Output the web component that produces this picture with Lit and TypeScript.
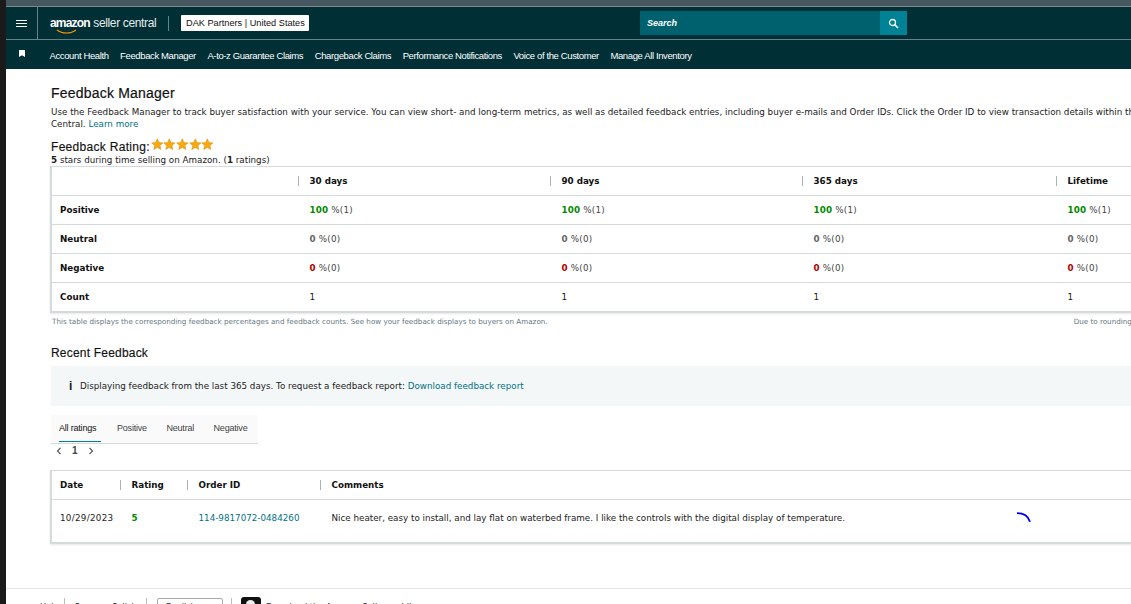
import { LitElement, css, html } from "lit";
import { customElement } from "lit/decorators.js";

const navLinks = [
  "Account Health",
  "Feedback Manager",
  "A-to-z Guarantee Claims",
  "Chargeback Claims",
  "Performance Notifications",
  "Voice of the Customer",
  "Manage All Inventory",
];

const periods = ["30 days", "90 days", "365 days", "Lifetime"];

const star = html`<svg class="star" viewBox="0 0 24 24" width="12.6" height="12.6">
  <path fill="#f7a90f" stroke="#d9900f" stroke-width="1" d="M12 1.5l3.2 7 7.6.8-5.7 5.1 1.6 7.5L12 18.1l-6.7 3.8 1.6-7.5L1.2 9.3l7.6-.8z" />
</svg>`;

@customElement("app-root")
export class AppRoot extends LitElement {
  static styles = css`
    :host {
      display: flex;
      width: 1131px;
      height: 604px;
      overflow: hidden;
      background: #fff;
      font-family: "DejaVu Sans", Verdana, sans-serif;
      font-size: 8.75px;
      color: #111;
    }
    .edge {
      flex: 0 0 6px;
      background: #1a1a1a;
    }
    .page {
      flex: 1;
      min-width: 0;
      display: flex;
      flex-direction: column;
      overflow: hidden;
    }
    .chrome {
      flex: 0 0 6px;
      background: #47575f;
      border-bottom: 1px solid #7d8a8c;
    }
    .top {
      flex: 0 0 32px;
      display: flex;
      align-items: center;
      background: #002f36;
      border-bottom: 1px solid #6b8083;
    }
    .burger {
      flex: 0 0 31px;
      height: 32px;
      display: flex;
      align-items: center;
      justify-content: center;
      border-right: 1px solid #6b8083;
    }
    .logo {
      display: flex;
      flex-direction: column;
      margin-left: 12px;
      width: 106px;
      color: #fff;
      font-family: "Liberation Sans", Arial, sans-serif;
      font-size: 12px;
      line-height: 15px;
      position: relative;
      white-space: nowrap;
    }
    .logo b {
      letter-spacing: -0.8px;
    }
    .logo span {
      font-weight: 400;
      letter-spacing: -0.35px;
      color: #e6ecec;
    }
    .smile {
      position: absolute;
      left: 6px;
      top: 13px;
    }
    .divider {
      width: 1px;
      height: 15px;
      background: #6b8083;
      margin: 0 12px;
    }
    .merchant {
      width: 128px;
      box-sizing: border-box;
      background: #fff;
      color: #111;
      font-family: "Liberation Sans", Arial, sans-serif;
      font-size: 9.2px;
      line-height: 16px;
      padding: 0 5px;
      border-radius: 1px;
      white-space: nowrap;
    }
    .search {
      display: flex;
      margin-left: 331px;
      width: 267px;
      height: 24px;
      background: #00616e;
    }
    .search span {
      flex: 1;
      color: #fff;
      font: italic 700 9px/24px "Liberation Sans", Arial, sans-serif;
      padding-left: 7px;
    }
    .search i {
      flex: 0 0 27px;
      background: #008296;
      display: flex;
      align-items: center;
      justify-content: center;
    }
    .nav {
      flex: 0 0 29px;
      display: flex;
      align-items: center;
      gap: 11.5px;
      background: #002f36;
      color: #fff;
      font-family: "Liberation Sans", Arial, sans-serif;
      font-size: 9.5px;
      letter-spacing: -0.38px;
      white-space: nowrap;
    }
    .nav span {
      position: relative;
      top: 1px;
    }
    .pin {
      flex: 0 0 32px;
      display: flex;
      justify-content: center;
      position: relative;
      top: -1px;
    }
    .content {
      flex: 1;
      padding: 16px 0 0 45px;
      min-height: 0;
    }
    .h1 {
      font: 400 14px/17px "Liberation Sans", Arial, sans-serif;
      letter-spacing: 0.2px;
      color: #111;
      margin: 0;
      -webkit-text-stroke: 0.2px #111;
    }
    .intro {
      width: 1200px;
      margin: 4px 0 0;
      line-height: 12px;
      color: #222;
    }
    a {
      color: #007185;
      text-decoration: none;
    }
    .rating-line {
      display: flex;
      align-items: flex-start;
      margin-top: 10px;
      height: 14px;
      font: 400 12px/14px "Liberation Sans", Arial, sans-serif;
      letter-spacing: 0.3px;
      -webkit-text-stroke: 0.15px #111;
      color: #111;
    }
    .stars {
      display: flex;
      margin-left: 1px;
      margin-top: -2px;
    }
    .star {
      display: block;
    }
    .sub {
      line-height: 12px;
      color: #222;
    }
    .table {
      width: 1300px;
      margin: 0 0 0 -1px;
      border: 1px solid #d5dbdb;
      border-bottom: 2px solid #d5dbdb;
      border-left-width: 2px;
      box-shadow: 0 1px 2px rgba(0, 0, 0, 0.1);
    }
    .row {
      display: grid;
      grid-template-columns: 246px 252px 252px 254px 252px;
      height: 28px;
      align-items: center;
      border-bottom: 1px solid #d5dbdb;
    }
    .row:last-child {
      border-bottom: 0;
    }
    .row > * {
      padding-left: 8px;
      white-space: nowrap;
    }
    .row b {
      font-weight: 700;
      color: #111;
    }
    .row .head {
      position: relative;
      padding-left: 11.5px;
    }
    .row .val {
      padding-left: 11.5px;
      letter-spacing: 0.2px;
    }
    .head::before {
      content: "";
      position: absolute;
      left: 0;
      top: 0;
      bottom: 0;
      width: 1px;
      background: #a9b3b3;
    }
    .good {
      color: #008a00;
      font-weight: 700;
    }
    .bad {
      color: #b00000;
      font-weight: 700;
    }
    .none {
      color: #666;
      font-weight: 700;
    }
    .pct {
      color: #444;
    }
    .note {
      display: flex;
      width: 1300px;
      margin-top: 4px;
      padding-left: 1px;
      font-size: 7.2px;
      line-height: 10px;
      color: #66787f;
      white-space: nowrap;
    }
    .note span:last-child {
      margin-left: 526px;
    }
    .h2 {
      font: 400 12px/16px "Liberation Sans", Arial, sans-serif;
      letter-spacing: 0.2px;
      -webkit-text-stroke: 0.15px #111;
      margin: 18px 0 0;
      color: #111;
    }
    .info {
      display: flex;
      align-items: center;
      height: 40px;
      margin-top: 5px;
      padding-left: 18px;
      background: #f3f7f8;
      color: #222;
      white-space: nowrap;
    }
    .info .i {
      font-family: "Liberation Sans", Arial, sans-serif;
      font-weight: 700;
      font-size: 12px;
      width: 11px;
    }
    .tabs {
      display: flex;
      width: 207px;
      height: 29px;
      margin-top: 9px;
      background: #fafafa;
      border-bottom: 1px solid #d5d9d9;
      font: 400 9px/1 "Liberation Sans", Arial, sans-serif;
      letter-spacing: -0.2px;
      color: #444;
      box-sizing: border-box;
      padding-left: 8px;
      white-space: nowrap;
    }
    .tabs span {
      flex: none;
      height: 27px;
      padding-top: 9px;
      box-sizing: border-box;
      margin-right: 19.5px;
    }
    .tabs .on {
      color: #111;
      border-bottom: 1px solid #008296;
      width: 42px;
      margin-right: 16px;
    }
    .pager {
      display: flex;
      align-items: center;
      height: 14px;
      padding-left: 5px;
      gap: 10px;
      font: 700 10px/14px "Liberation Sans", Arial, sans-serif;
      color: #444;
    }
    .pager svg {
      display: block;
    }
    .recent {
      width: 1300px;
      margin: 12px 0 0 -1px;
      border: 1px solid #d5dbdb;
      border-bottom: 2px solid #d5dbdb;
      border-left-width: 2px;
      box-shadow: 0 1px 2px rgba(0, 0, 0, 0.1);
      position: relative;
    }
    .recent .tr {
      display: grid;
      grid-template-columns: 68px 67px 133px 1000px;
      white-space: nowrap;
    }
    .recent .tr > * {
      padding-left: 11.5px;
    }
    .recent .tr > :first-child {
      padding-left: 8px;
    }
    .recent .th {
      height: 28px;
      align-items: center;
      border-bottom: 1px solid #d5dbdb;
      font-weight: 700;
    }
    .recent .th span {
      position: relative;
    }
    .recent .th span + span::before {
      content: "";
      position: absolute;
      left: 0;
      top: 0;
      bottom: 0;
      width: 1px;
      background: #a9b3b3;
    }
    .recent .td {
      height: 42px;
      padding-top: 12px;
      box-sizing: border-box;
      line-height: 12px;
      color: #222;
    }
    .recent .td > :first-child {
      letter-spacing: 0.3px;
    }
    .spinner {
      position: absolute;
      left: 965px;
      top: 41px;
    }
    .footer {
      flex: 0 0 16px;
      display: flex;
      align-items: flex-start;
      border-top: 1px solid #e3e6e6;
      padding: 9px 0 0 34px;
      color: #333;
      font-size: 8.3px;
      line-height: 12px;
      white-space: nowrap;
      overflow: hidden;
      box-sizing: border-box;
    }
    .footer .txt {
      margin-top: 3px;
    }
    .footer .sep {
      width: 1px;
      height: 12px;
      background: #bbb;
      margin-left: 5px;
      margin-right: 10px;
      flex: none;
    }
    .footer .lang {
      flex: none;
      width: 66px;
      height: 12px;
      border: 1px solid #aaa;
      border-radius: 2px;
      padding: 2px 0 0 8px;
      box-sizing: border-box;
    }
    .footer .phone {
      flex: none;
      width: 20px;
      height: 14px;
      background: #111;
      border-radius: 3px;
      margin: -1px 5px 0 0;
      display: flex;
      justify-content: center;
      padding-top: 3px;
      box-sizing: border-box;
    }
    .footer .phone::after {
      content: "";
      width: 9px;
      height: 9px;
      border-radius: 50%;
      background: #eee;
    }
    .footer .pp {
      width: 69px;
    }
    .footer .pp + .sep {
      margin-left: 2px;
    }
    .footer .lang + .sep {
      margin-left: 8px;
      margin-right: 9px;
    }
  `;

  render() {
    return html`
      <div class="edge"></div>
      <div class="page">
        <div class="chrome"></div>
        <div class="top">
          <div class="burger">
            <svg width="11" height="7" viewBox="0 0 11 7"><path fill="none" stroke="#fff" stroke-width="1" d="M0 .5h11M0 3.5h11M0 6.5h11" /></svg>
          </div>
          <div class="logo">
            <div><b>amazon</b> <span>seller central</span></div>
            <svg class="smile" width="22" height="6" viewBox="0 0 22 6"><path fill="none" stroke="#ff9900" stroke-width="1.2" d="M1 1c5 4 14 4 19 0" /></svg>
          </div>
          <div class="divider"></div>
          <div class="merchant">DAK Partners | United States</div>
          <div class="search">
            <span>Search</span>
            <i><svg width="11" height="11" viewBox="0 0 11 11"><circle cx="4.5" cy="4.5" r="3" fill="none" stroke="#fff" stroke-width="1.3" /><path stroke="#fff" stroke-width="1.6" d="M6.8 6.8L10 10" /></svg></i>
          </div>
        </div>
        <div class="nav">
          <div class="pin">
            <svg width="6" height="7" viewBox="0 0 6 7"><path fill="#fff" d="M0 0h6v7L3 5.2 0 7z" /></svg>
          </div>
          ${navLinks.map((link) => html`<span>${link}</span>`)}
        </div>
        <div class="content">
          <h1 class="h1">Feedback Manager</h1>
          <p class="intro">
            Use the Feedback Manager to track buyer satisfaction with your service. You can view short- and long-term metrics, as well as detailed feedback entries, including buyer e-mails and Order IDs. Click the Order ID to view transaction details within the Seller<br />Central. <a>Learn more</a>
          </p>
          <div class="rating-line">
            Feedback Rating:
            <div class="stars">${star}${star}${star}${star}${star}</div>
          </div>
          <div class="sub"><b>5</b> stars during time selling on Amazon. (<b>1</b> ratings)</div>
          <div class="table">
            <div class="row">
              <span></span>
              ${periods.map((p) => html`<b class="head">${p}</b>`)}
            </div>
            <div class="row">
              <b>Positive</b>
              ${periods.map(() => html`<span class="val"><span class="good">100</span> <span class="pct">%(1)</span></span>`)}
            </div>
            <div class="row">
              <b>Neutral</b>
              ${periods.map(() => html`<span class="val"><span class="none">0</span> <span class="pct">%(0)</span></span>`)}
            </div>
            <div class="row">
              <b>Negative</b>
              ${periods.map(() => html`<span class="val"><span class="bad">0</span> <span class="pct">%(0)</span></span>`)}
            </div>
            <div class="row">
              <b>Count</b>
              ${periods.map(() => html`<span class="val">1</span>`)}
            </div>
          </div>
          <div class="note">
            <span>This table displays the corresponding feedback percentages and feedback counts. See how your feedback displays to buyers on Amazon.</span>
            <span>Due to rounding, percentages may not add up to 100%.</span>
          </div>
          <h2 class="h2">Recent Feedback</h2>
          <div class="info">
            <span class="i">i</span>
            <span>Displaying feedback from the last 365 days. To request a feedback report:&nbsp;<a>Download feedback report</a></span>
          </div>
          <div class="tabs">
            <span class="on">All ratings</span>
            <span>Positive</span>
            <span>Neutral</span>
            <span>Negative</span>
          </div>
          <div class="pager">
            <svg width="6" height="8" viewBox="0 0 6 8"><path fill="none" stroke="#555" stroke-width="1.2" d="M4.5.8L1.5 4l3 3.2" /></svg>
            <span>1</span>
            <svg width="6" height="8" viewBox="0 0 6 8"><path fill="none" stroke="#555" stroke-width="1.2" d="M1.5.8L4.5 4l-3 3.2" /></svg>
          </div>
          <div class="recent">
            <div class="tr th">
              <span>Date</span><span>Rating</span><span>Order ID</span><span>Comments</span>
            </div>
            <div class="tr td">
              <span>10/29/2023</span>
              <span class="good">5</span>
              <a>114-9817072-0484260</a>
              <span>Nice heater, easy to install, and lay flat on waterbed frame. I like the controls with the digital display of temperature.</span>
            </div>
            <svg class="spinner" width="16" height="12" viewBox="0 0 16 12"><path fill="none" stroke="#0000ee" stroke-width="1.8" d="M0 1.2c5 0 11 1.800 13 8.600" /></svg>
          </div>
        </div>
        <div class="footer">
          <span class="txt">Help</span><i class="sep"></i>
          <span class="txt pp">Program Policies</span><i class="sep"></i>
          <span class="lang">English</span><i class="sep"></i>
          <i class="phone"></i>
          <span class="txt">Download the Amazon Seller mobile app</span>
        </div>
      </div>
    `;
  }
}
